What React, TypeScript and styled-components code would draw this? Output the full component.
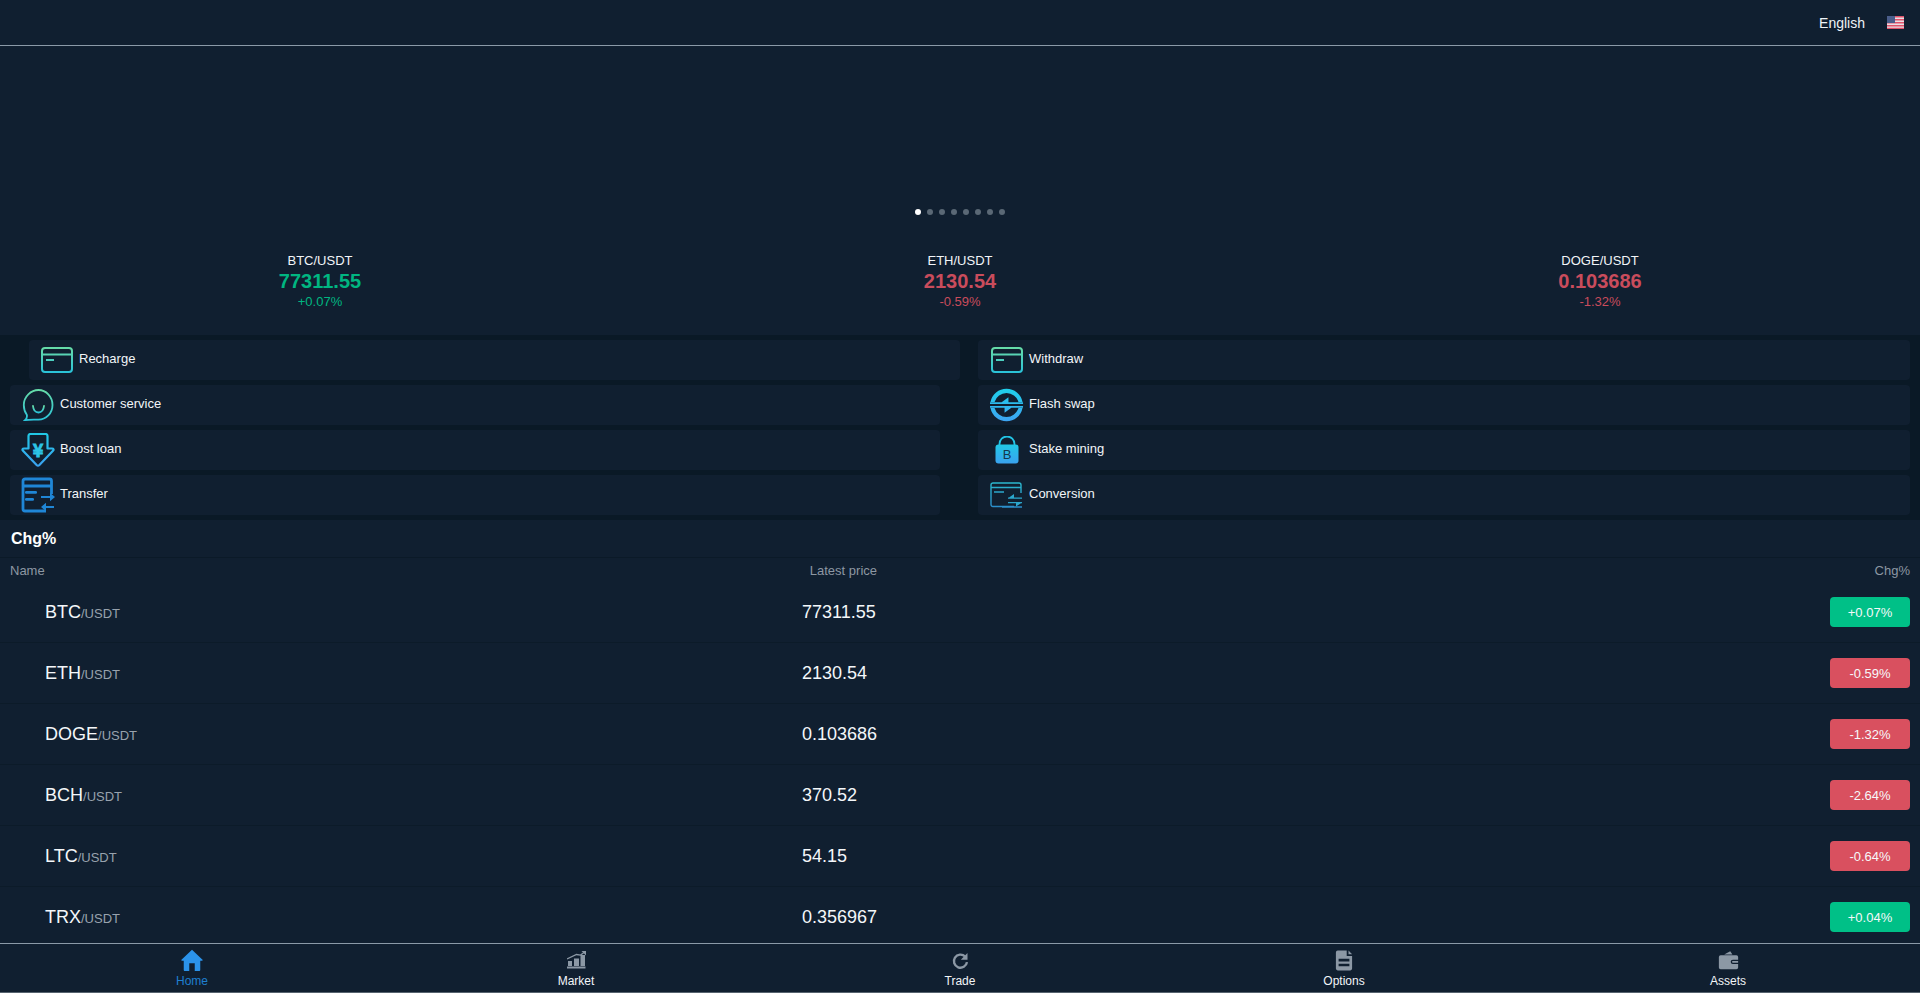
import React from "react";
import styled, { createGlobalStyle } from "styled-components";

const Global = createGlobalStyle`
  html, body { margin: 0; padding: 0; background: #101f30; }
  body { font-family: "Liberation Sans", Arial, sans-serif; color: #fff; }
  * { box-sizing: border-box; }
`;

const Page = styled.div`
  width: 1920px;
  height: 993px;
  overflow: hidden;
  background: #101f30;
  display: flex;
  flex-direction: column;
`;

const Header = styled.header`
  height: 46px;
  flex: none;
  border-bottom: 1px solid #8b9aa8;
  display: flex;
  align-items: center;
  justify-content: flex-end;
  gap: 22px;
  padding: 0 16px 0 0;
  font-size: 14px;
  color: #eef3f7;
`;

const Banner = styled.section`
  height: 199px;
  flex: none;
  position: relative;
`;

const Dots = styled.div`
  position: absolute;
  left: 915px;
  top: 163px;
  display: flex;
  gap: 6px;
`;

const Dot = styled.span<{ $on?: boolean }>`
  width: 6px;
  height: 6px;
  border-radius: 50%;
  background: ${(p) => (p.$on ? "#ffffff" : "#5a6875")};
`;

const Tickers = styled.section`
  height: 90px;
  flex: none;
  display: grid;
  grid-template-columns: repeat(3, 1fr);
  padding-top: 8px;
`;

const Ticker = styled.div`
  display: flex;
  flex-direction: column;
  align-items: center;
`;

const TickerName = styled.div`
  font-size: 13px;
  line-height: 16px;
  color: #f2f5f8;
`;

const TickerPrice = styled.div<{ $up: boolean }>`
  font-size: 20px;
  font-weight: 700;
  line-height: 25px;
  color: ${(p) => (p.$up ? "#00b681" : "#c94c5c")};
`;

const TickerPct = styled.div<{ $up: boolean }>`
  font-size: 13px;
  line-height: 16px;
  color: ${(p) => (p.$up ? "#00b681" : "#c94c5c")};
`;

const Menu = styled.section`
  height: 185px;
  flex: none;
  background: #0a1926;
  padding: 5px 10px 0;
  display: grid;
  grid-template-columns: 930px 932px;
  column-gap: 38px;
  grid-auto-rows: 40px;
  row-gap: 5px;
`;

const MenuCard = styled.div<{ $shift?: boolean; $right?: boolean }>`
  background: #101f30;
  border-radius: 4px;
  display: flex;
  align-items: center;
  padding-left: ${(p) => (p.$right ? "11px" : "10px")};
  gap: 5px;
  font-size: 13px;
  color: #f2f5f8;
  ${(p) => (p.$shift ? "margin-left: 19px; margin-right: -20px;" : "")}
`;

const IconBox = styled.span`
  width: 35px;
  height: 40px;
  flex: none;
  display: flex;
  align-items: center;
  justify-content: center;
`;

const MenuLabel = styled.span`
  padding-bottom: 3px;
`;

const SectionTitle = styled.h2`
  margin: 0;
  height: 38px;
  flex: none;
  padding-left: 11px;
  display: flex;
  align-items: center;
  font-size: 16px;
  font-weight: 700;
  border-bottom: 1px solid #0b1a28;
`;

const Table = styled.div`
  flex: 1;
  min-height: 0;
  overflow: hidden;
`;

const Grid = styled.div`
  display: grid;
  grid-template-columns: 792px 75px 1fr;
  padding: 0 10px;
  align-items: center;
`;

const HeadRow = styled(Grid)`
  height: 24px;
  font-size: 13px;
  color: #8d97a3;
`;

const HeadPrice = styled.span`
  grid-column: 1 / 3;
  grid-row: 1;
  text-align: right;
`;

const HeadName = styled.span`
  grid-column: 1;
  grid-row: 1;
`;

const HeadChg = styled.span`
  text-align: right;
  grid-column: 3;
  grid-row: 1;
`;

const Row = styled(Grid)`
  height: 61px;
  border-bottom: 1px solid #0c1b29;
`;

const Pair = styled.div`
  padding-left: 35px;
  font-size: 18px;
  color: #f4f7fa;
`;

const Quote = styled.span`
  font-size: 13px;
  color: #98a2ad;
`;

const Price = styled.div`
  font-size: 18px;
  color: #f4f7fa;
  white-space: nowrap;
`;

const ChgCell = styled.div`
  display: flex;
  justify-content: flex-end;
`;

const Badge = styled.div<{ $up: boolean }>`
  width: 80px;
  height: 30px;
  border-radius: 4px;
  background: ${(p) => (p.$up ? "#00c087" : "#d9505f")};
  color: #f6f8fa;
  font-size: 13px;
  display: flex;
  align-items: center;
  justify-content: center;
`;

const Nav = styled.nav`
  height: 50px;
  flex: none;
  background: #101f30;
  border-top: 1px solid #8b9aa8;
  border-bottom: 1px solid #56636f;
  display: grid;
  grid-template-columns: repeat(5, 1fr);
`;

const NavItem = styled.div<{ $on?: boolean }>`
  display: flex;
  flex-direction: column;
  align-items: center;
  padding-top: 4px;
  font-size: 12px;
  line-height: 14px;
  color: ${(p) => (p.$on ? "#1f7fd1" : "#f2f5f8")};
`;

const NavIcon = styled.span<{ $on?: boolean }>`
  width: 24px;
  height: 24px;
  margin-bottom: 2px;
  color: ${(p) => (p.$on ? "#2b93ea" : "#8c98a5")};
  display: flex;
  align-items: center;
  justify-content: center;
`;

const Grad = ({ id, a, b }: { id: string; a: string; b: string }) => (
  <defs>
    <linearGradient id={id} x1="0" y1="0" x2="0" y2="1">
      <stop offset="0" stopColor={a} />
      <stop offset="1" stopColor={b} />
    </linearGradient>
  </defs>
);

const CardIcon = ({ id }: { id: string }) => (
  <svg width="32" height="26" viewBox="0 0 32 26" fill="none">
    <Grad id={id} a="#66dba8" b="#2bc3d9" />
    <rect x="1" y="1" width="30" height="24" rx="3" stroke={`url(#${id})`} strokeWidth="2" />
    <path d="M1 7.500h30" stroke="#58d4b4" strokeWidth="2" />
    <path d="M5 13h8" stroke="#4ccfbf" strokeWidth="2" />
  </svg>
);

const ChatIcon = () => (
  <svg width="32" height="32" viewBox="0 0 32 32" fill="none">
    <Grad id="chat" a="#66dba8" b="#2bc3d9" />
    <path d="M16.500 1C24 1 30.500 7.600 30.500 16S24 30.600 16.500 30.600c-3.500 0-8.500-.4-13.500.6 1.800-1.600 2.300-3.400 1.800-5.400C2.800 23 1.800 19.600 1.800 16 1.800 7.600 9 1 16.500 1Z" stroke="url(#chat)" strokeWidth="1.800" />
    <path d="M11 17c.4 4.500 2.800 6.500 5.500 6.500s5-2 5.500-6.500" stroke="url(#chat)" strokeWidth="1.800" strokeLinecap="round" />
  </svg>
);

const LoanIcon = () => (
  <svg width="34" height="34" viewBox="0 0 34 34" fill="none">
    <Grad id="loan" a="#21c8e6" b="#3aa2f0" />
    <path d="M7.500 15.500V3a2 2 0 0 1 2-2h15a2 2 0 0 1 2 2v12.500H31c1.500 0 2 1.300 1 2.300L18.400 32a2 2 0 0 1-2.800 0L2 17.800c-1-1-.5-2.300 1-2.300Z" stroke="url(#loan)" strokeWidth="2.200" strokeLinejoin="round" />
    <text x="17" y="24" textAnchor="middle" fontFamily="'Noto Sans CJK SC','Liberation Sans',sans-serif" fontWeight="700" fontSize="18" fill="#2cc4e6" stroke="#2cc4e6" strokeWidth="0.800">¥</text>
  </svg>
);

const TransferIcon = () => (
  <svg width="34" height="36" viewBox="0 0 34 36" fill="none">
    <path d="M30.500 17V4a2 2 0 0 0-2-2H4a2 2 0 0 0-2 2v28a2 2 0 0 0 2 2h21M2 9h28.500" stroke="#1f86d6" strokeWidth="2.800" />
    <rect x="4" y="14" width="12" height="2.800" rx="1.200" fill="#1f86d6" />
    <rect x="4" y="21" width="9" height="2.800" rx="1.200" fill="#1f86d6" />
    <path d="M20 19h9v-3.200l5 4.200-5 4.200V21h-9ZM33 29h-8v-3.200L20 30l5 4.200V31h8Z" fill="#1f86d6" />
  </svg>
);

const SwapIcon = () => (
  <svg width="36" height="36" viewBox="0 0 36 36">
    <Grad id="swap" a="#1fd0ea" b="#3da4f2" />
    <path
      d="M1.500 15A16.800 16.800 0 0 1 34.500 15h-4.200A12.800 12.800 0 0 0 5.700 15ZM1 15.200h34V17H1ZM13 15.200l7-5.200v5.200ZM1.500 21A16.800 16.800 0 0 0 34.500 21h-4.200A12.800 12.800 0 0 1 5.700 21ZM1 19h34v1.800H1ZM23 20.800l-7 5.200v-5.200Z"
      fill="url(#swap)"
    />
  </svg>
);

const LockIcon = () => (
  <svg width="24" height="28" viewBox="0 0 24 28" fill="none">
    <Grad id="lock" a="#21c8e6" b="#3aa2f0" />
    <path d="M4.500 10V8a7.500 7.500 0 0 1 15 0v2" stroke="#22c4e6" strokeWidth="1.800" />
    <rect x="0.500" y="8.500" width="23" height="19" rx="3" fill="url(#lock)" />
    <text x="12" y="23" textAnchor="middle" fontFamily="'Liberation Sans',sans-serif" fontSize="13" fill="#14384f">B</text>
  </svg>
);

const ConvertIcon = () => (
  <svg width="33" height="26" viewBox="0 0 33 26" fill="none">
    <Grad id="conv" a="#2bb7cd" b="#2b8ecb" />
    <path d="M24 24.500H3a2 2 0 0 1-2-2V3a2 2 0 0 1 2-2h26a2 2 0 0 1 2 2v8M1 5.500h30M4 10h10M12 25h20" stroke="url(#conv)" strokeWidth="1.400" />
    <path d="M18 15.500h14v1.300H18ZM18 20h14v1.300H18ZM19 15.500l5-3.500v3.500ZM31 21.300l-5 3.300v-3.300Z" fill="#2ba6cc" />
  </svg>
);

const HomeIcon = () => (
  <svg width="22" height="22" viewBox="0 0 24 24" fill="currentColor">
    <path d="M12 .8 23.500 11.800c.4.400.1 1-.4 1H21V23a1 1 0 0 1-1 1h-5v-8.500H9V24H4a1 1 0 0 1-1-1V12.800H.9c-.5 0-.8-.6-.4-1Z" />
  </svg>
);

const MarketIcon = () => (
  <svg width="19" height="18" viewBox="0 0 19 18" fill="currentColor">
    <path d="M0 15.500h18.500v2H0ZM1 10h4v5H1ZM7 7.500h5V15H7ZM13.500 4H18v11h-4.500Z" />
    <path d="M0 8 9.500 3.500l4 .6L17 1.500" stroke="currentColor" strokeWidth="1.300" fill="none" />
    <path d="M14.500 0H19v4.500Z" />
  </svg>
);

const TradeIcon = () => (
  <svg width="18" height="19" viewBox="0 0 22 24" fill="none">
    <path d="M17.500 7A8.300 8.300 0 1 0 19.800 14" stroke="currentColor" strokeWidth="3" />
    <path d="M20.500 2.500v8.500H12Z" fill="currentColor" />
  </svg>
);

const OptionsIcon = () => (
  <svg width="18" height="23" viewBox="0 0 20 24" fill="currentColor">
    <path d="M3 1h10v6h6v14a2 2 0 0 1-2 2H3a2 2 0 0 1-2-2V3a2 2 0 0 1 2-2ZM4 10v3h12v-3ZM4 15.500v3h12v-3Z" fillRule="evenodd" />
    <path d="M15 1l4 4h-4Z" />
  </svg>
);

const AssetsIcon = () => (
  <svg width="21" height="21" viewBox="0 0 24 24" fill="currentColor">
    <path d="M7 5 14 1.500 16.500 5ZM3 6h18a2 2 0 0 1 2 2v3h-6a2.500 2.500 0 0 0 0 5h6v4a2 2 0 0 1-2 2H3a2 2 0 0 1-2-2V8a2 2 0 0 1 2-2ZM17 12.500h6v2h-6a1 1 0 0 1 0-2Z" fillRule="evenodd" />
  </svg>
);

const Flag = () => (
  <svg width="17" height="13" viewBox="0 0 17 13">
    <rect width="17" height="13" fill="#e8dfe4" />
    <path d="M0 0h17v1.500H0ZM0 3h17v1.500H0ZM0 6h17v1.500H0ZM0 9h17v1.500H0ZM0 11.800h17V13H0Z" fill="#e0526a" />
    <rect width="8" height="7" fill="#4a5d8a" />
  </svg>
);

const tickers = [
  { name: "BTC/USDT", price: "77311.55", pct: "+0.07%", up: true },
  { name: "ETH/USDT", price: "2130.54", pct: "-0.59%", up: false },
  { name: "DOGE/USDT", price: "0.103686", pct: "-1.32%", up: false },
];

const rows = [
  { base: "BTC", price: "77311.55", pct: "+0.07%", up: true },
  { base: "ETH", price: "2130.54", pct: "-0.59%", up: false },
  { base: "DOGE", price: "0.103686", pct: "-1.32%", up: false },
  { base: "BCH", price: "370.52", pct: "-2.64%", up: false },
  { base: "LTC", price: "54.15", pct: "-0.64%", up: false },
  { base: "TRX", price: "0.356967", pct: "+0.04%", up: true },
];

const menu: { label: string; icon: React.ReactNode; shift?: boolean; right?: boolean }[] = [
  { label: "Recharge", icon: <CardIcon id="c1" />, shift: true },
  { label: "Withdraw", icon: <CardIcon id="c2" />, right: true },
  { label: "Customer service", icon: <ChatIcon /> },
  { label: "Flash swap", icon: <SwapIcon />, right: true },
  { label: "Boost loan", icon: <LoanIcon /> },
  { label: "Stake mining", icon: <LockIcon />, right: true },
  { label: "Transfer", icon: <TransferIcon /> },
  { label: "Conversion", icon: <ConvertIcon />, right: true },
];

const nav: { label: string; icon: React.ReactNode; on?: boolean }[] = [
  { label: "Home", icon: <HomeIcon />, on: true },
  { label: "Market", icon: <MarketIcon /> },
  { label: "Trade", icon: <TradeIcon /> },
  { label: "Options", icon: <OptionsIcon /> },
  { label: "Assets", icon: <AssetsIcon /> },
];

export default function App() {
  return (
    <Page>
      <Global />
      <Header>
        <span>English</span>
        <Flag />
      </Header>
      <Banner>
        <Dots>
          {Array.from({ length: 8 }, (_, i) => (
            <Dot key={i} $on={i === 0} />
          ))}
        </Dots>
      </Banner>
      <Tickers>
        {tickers.map((t) => (
          <Ticker key={t.name}>
            <TickerName>{t.name}</TickerName>
            <TickerPrice $up={t.up}>{t.price}</TickerPrice>
            <TickerPct $up={t.up}>{t.pct}</TickerPct>
          </Ticker>
        ))}
      </Tickers>
      <Menu>
        {menu.map((m) => (
          <MenuCard key={m.label} $shift={m.shift} $right={m.right}>
            <IconBox>{m.icon}</IconBox>
            <MenuLabel>{m.label}</MenuLabel>
          </MenuCard>
        ))}
      </Menu>
      <SectionTitle>Chg%</SectionTitle>
      <Table>
        <HeadRow>
          <HeadName>Name</HeadName>
          <HeadPrice>Latest price</HeadPrice>
          <HeadChg>Chg%</HeadChg>
        </HeadRow>
        {rows.map((r) => (
          <Row key={r.base}>
            <Pair>
              {r.base}
              <Quote>/USDT</Quote>
            </Pair>
            <Price>{r.price}</Price>
            <ChgCell>
              <Badge $up={r.up}>{r.pct}</Badge>
            </ChgCell>
          </Row>
        ))}
      </Table>
      <Nav>
        {nav.map((n) => (
          <NavItem key={n.label} $on={n.on}>
            <NavIcon $on={n.on}>{n.icon}</NavIcon>
            {n.label}
          </NavItem>
        ))}
      </Nav>
    </Page>
  );
}
